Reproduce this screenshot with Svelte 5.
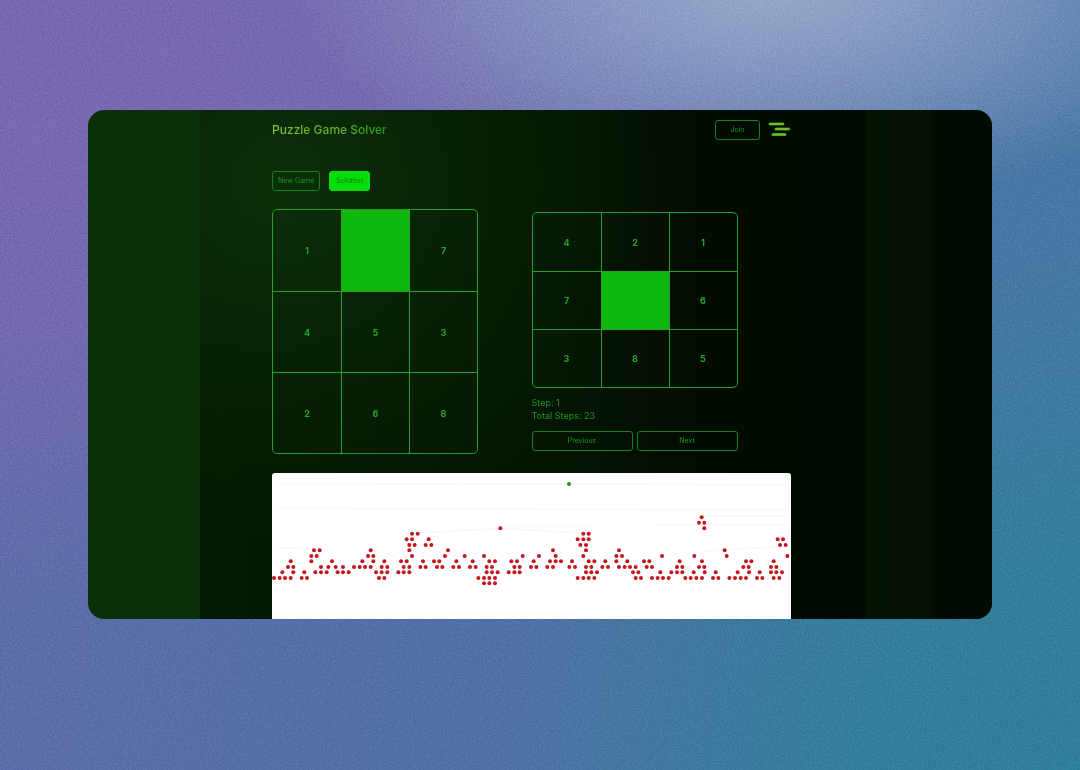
<script lang="ts">
    type Row = { y: number; xs: number[] }

    const board = [1, null, 7, 4, 5, 3, 2, 6, 8]
    const solution = [4, 2, 1, 7, null, 6, 3, 8, 5]

    let step = $state(1)
    const totalSteps = 23

    // visited search nodes, one row per depth
    const rows: Row[] = [
        { y: 133, xs: [1289] },
        { y: 149, xs: [1281, 1297] },
        { y: 166, xs: [685, 1297] },
        { y: 182, xs: [420, 437, 934, 950] },
        { y: 199, xs: [404, 420, 470, 917, 934, 950, 1517, 1533] },
        { y: 216, xs: [412, 428, 461, 478, 925, 942, 1524, 1541] },
        { y: 232, xs: [126, 143, 296, 412, 528, 843, 942, 1041, 1358] },
        { y: 249, xs: [118, 134, 288, 304, 420, 519, 578, 636, 752, 801, 851, 934, 1033, 1050, 1170, 1267, 1364, 1546] },
        { y: 265, xs: [56, 118, 180, 271, 304, 337, 387, 404, 453, 486, 502, 553, 602, 652, 669, 718, 735, 785, 834, 851, 867, 900, 950, 967, 1000, 1033, 1066, 1116, 1132, 1223, 1290, 1422, 1438, 1505] },
        { y: 282, xs: [48, 64, 147, 169, 191, 213, 246, 263, 279, 296, 329, 346, 395, 412, 445, 461, 495, 511, 544, 561, 594, 611, 644, 660, 727, 743, 777, 793, 826, 843, 892, 909, 942, 958, 991, 1008, 1041, 1058, 1074, 1091, 1124, 1140, 1215, 1231, 1281, 1297, 1414, 1430, 1497, 1513] },
        { y: 298, xs: [31, 64, 97, 130, 147, 164, 197, 213, 230, 312, 329, 346, 379, 395, 412, 644, 660, 677, 710, 727, 743, 942, 958, 975, 1083, 1099, 1165, 1198, 1215, 1231, 1265, 1298, 1331, 1397, 1431, 1463, 1497, 1513, 1530] },
        { y: 315, xs: [6, 23, 39, 56, 89, 105, 321, 337, 619, 636, 652, 669, 917, 934, 950, 967, 1091, 1107, 1140, 1157, 1173, 1190, 1240, 1256, 1273, 1290, 1323, 1339, 1372, 1389, 1406, 1422, 1455, 1471, 1505, 1522] },
        { y: 331, xs: [636, 652, 669] },
    ]
</script>

<div class="backdrop">
    <svg class="grain" aria-hidden="true">
        <filter id="grain" color-interpolation-filters="sRGB">
            <feTurbulence type="fractalNoise" baseFrequency="0.6" numOctaves="2" seed="4" />
            <feColorMatrix values="1 0 0 0 0  1 0 0 0 0  1 0 0 0 0  0 0 0 0 1" />
        </filter>
        <rect width="100%" height="100%" filter="url(#grain)" />
    </svg>

    <div class="window">
        <main>
            <header>
                <h1>Puzzle Game Solver</h1>
                <nav>
                    <button class="join">Join</button>
                    <button class="menu" aria-label="Menu">
                        <svg viewBox="0 0 23 15" width="23" height="15">
                            <g stroke="#1b9a1b" stroke-width="3" stroke-linecap="round">
                                <path d="M2 2.1H15M8 7.1H21M5 12.6H17" />
                            </g>
                            <g stroke="#7fb82c" stroke-width="2" stroke-linecap="round">
                                <path d="M2 2H15M8 7H20M5 12.5H17" />
                            </g>
                        </svg>
                    </button>
                </nav>
            </header>

            <div class="actions">
                <button>New Game</button>
                <button class="active">Solution</button>
            </div>

            <div class="boards">
                <section>
                    <div class="board tall">
                        {#each board as n}
                            <div class="cell" class:empty={n === null}>{n ?? ''}</div>
                        {/each}
                    </div>
                </section>

                <section class="solution">
                    <div class="board">
                        {#each solution as n}
                            <div class="cell" class:empty={n === null}>{n ?? ''}</div>
                        {/each}
                    </div>
                    <p>Step: {step}</p>
                    <p>Total Steps: {totalSteps}</p>
                    <div class="steps">
                        <button onclick={() => (step = Math.max(1, step - 1))}>Previous</button>
                        <button onclick={() => (step = Math.min(totalSteps, step + 1))}>Next</button>
                    </div>
                </section>
            </div>

            <svg class="tree" viewBox="0 0 1557 438" role="img" aria-label="Search tree">
                <g class="edges">
                    <path d="M10 34L891 33L1550 36" />
                    <path d="M8 106L891 109L1550 110" />
                    <path d="M437 180L685 166L960 182M685 160H960" />
                    <path d="M1150 155H1289L1540 156M1289 129H1540" />
                    <path d="M8 223L126 228M1250 244L1358 230L1517 222" />
                </g>
                {#each rows as row}
                    {#each row.xs as x}
                        <circle cx={x} cy={row.y} r="6" />
                    {/each}
                {/each}
                <circle class="root" cx="891" cy="33" r="6" />
            </svg>
        </main>
    </div>
</div>

<style>
    :global(body) { margin: 0; }
    .backdrop {
        position: relative;
        box-sizing: border-box;
        min-height: 100vh;
        padding: 110px 88px;
        background:
            radial-gradient(ellipse 480px 230px at 770px -20px, #9ba9c9 0%, rgba(150,165,202,0.7) 40%, rgba(120,148,190,0) 100%),
            radial-gradient(ellipse 560px 520px at 100% 100%, #2f7e98 0%, rgba(48,126,153,0.9) 40%, rgba(60,118,160,0) 100%),
            radial-gradient(ellipse 860px 560px at 4% 8%, #7968b1 0%, rgba(121,105,177,0.85) 45%, rgba(110,104,174,0) 100%),
            linear-gradient(100deg, #5f6ca9 0%, #4f70a4 50%, #4678a4 100%);
        font-family: Inter, "Liberation Sans", sans-serif;
        color: #1d9420;
    }
    .grain {
        position: absolute;
        inset: 0;
        width: 100%;
        height: 100%;
        opacity: 0.15;
        mix-blend-mode: overlay;
    }
    .window {
        position: relative;
        overflow: hidden;
        border-radius: 16px;
        padding-left: 112px;
        background: #0b2f09;
    }
    main {
        padding: 0 201px 0 72px;
        background:
            radial-gradient(ellipse 380px 360px at 80px 70px, rgba(13,54,10,0.75) 0%, rgba(10,44,8,0.45) 50%, rgba(4,20,3,0) 100%),
            linear-gradient(90deg, #051904 0%, #041503 45%, #020c01 62%, #020b01 84%, #041202 84%, #031002 92%, #020b01 93%);
    }
    header {
        display: flex;
        justify-content: space-between;
        align-items: center;
        height: 39px;
    }
    h1 {
        margin: 0;
        font-size: 12px;
        line-height: 16px;
        font-weight: 500;
        color: transparent;
        background: linear-gradient(90deg, #82c42c, #5eb028 65%, #159c1c);
        background-clip: text;
    }
    nav {
        display: flex;
        align-items: center;
        gap: 8px;
    }
    button {
        box-sizing: border-box;
        height: 20px;
        padding: 0 5px;
        border: 1px solid #158019;
        border-radius: 3px;
        background: none;
        color: #1a961d;
        font: 7px/10px Inter, "Liberation Sans", sans-serif;
        cursor: pointer;
    }
    .join { width: 45px; }
    .menu {
        display: flex;
        align-items: center;
        padding: 0;
        border: 0;
    }
    .actions {
        display: flex;
        gap: 9px;
        margin-top: 22px;
    }
    .active {
        padding: 0 6px;
        border-color: #07dc0b;
        background: #07dc0b;
        color: #0d7a10;
    }
    .boards {
        display: grid;
        grid-template-columns: 1fr 1fr;
        margin: 18px 0 19px;
    }
    .solution { padding-top: 3px; }
    .board {
        display: grid;
        grid-template-columns: repeat(3, 1fr);
        grid-auto-rows: 58px;
        width: 206px;
        box-sizing: border-box;
        overflow: hidden;
        border: 1px solid #26a022;
        border-radius: 5px;
    }
    .tall { grid-auto-rows: 81px; }
    .cell {
        display: flex;
        align-items: center;
        justify-content: center;
        font-size: 9px;
        font-weight: 700;
        color: #22a526;
    }
    .cell:not(:nth-child(3n + 1)) { border-left: 1px solid #26a022; }
    .cell:nth-child(n + 4) { border-top: 1px solid #26a022; }
    .empty { background: #0db70d; }
    p {
        margin: 0;
        font-size: 9px;
        line-height: 13px;
    }
    .board + p { margin-top: 8px; }
    .steps {
        display: grid;
        grid-template-columns: 1fr 1fr;
        gap: 4px;
        width: 206px;
        margin-top: 9px;
    }
    .tree {
        display: block;
        width: 100%;
        border-radius: 3px 3px 0 0;
        background: #fff;
    }
    .tree circle { fill: #c4161c; }
    .tree .root { fill: #3c8a2e; }
    .edges path {
        fill: none;
        stroke: #fef5f4;
        stroke-width: 4;
    }
</style>
